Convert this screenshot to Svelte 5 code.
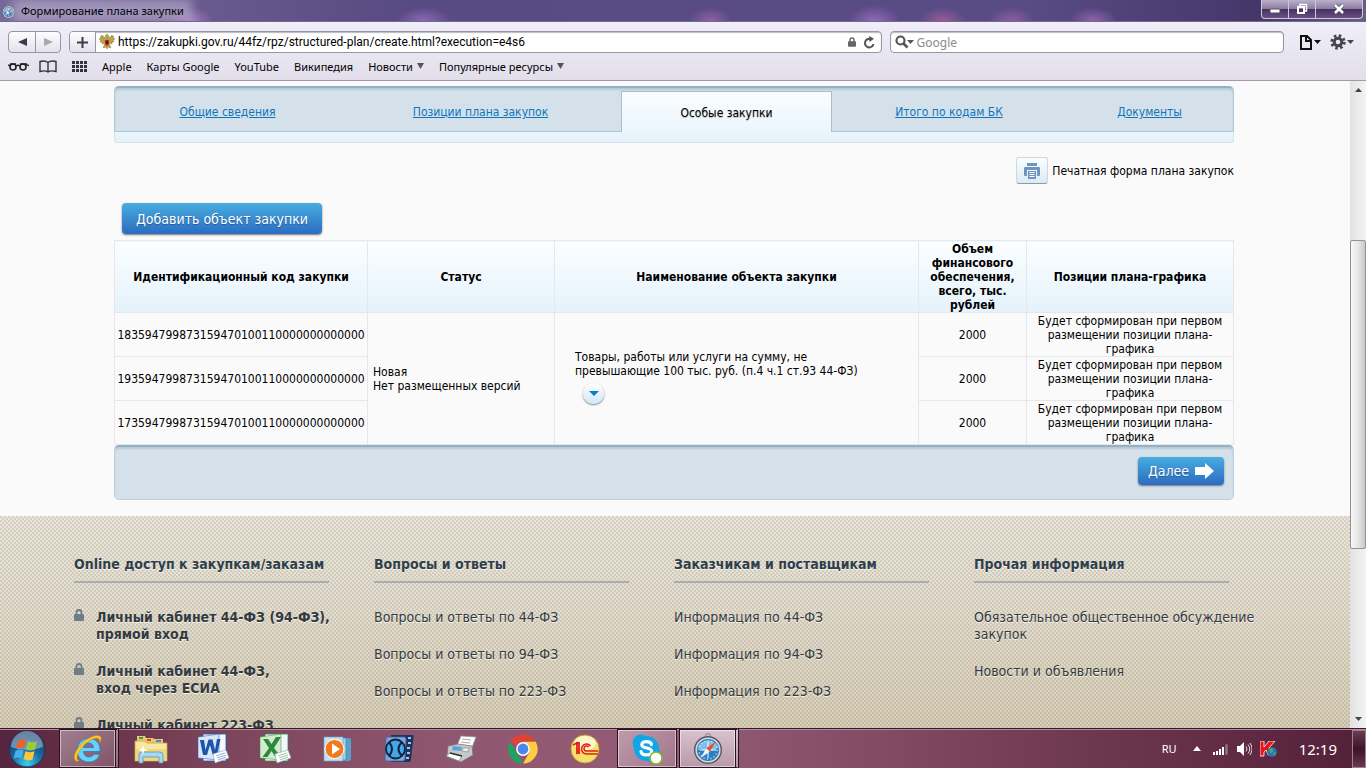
<script lang="ts">
  interface Tab {
    label: string;
    active?: boolean;
  }

  interface FooterColumn {
    title: string;
    secure?: boolean;
    /** Each link is a list of lines. */
    links: string[][];
  }

  const bookmarks = ['Apple', 'Карты Google', 'YouTube', 'Википедия'];
  const folders = ['Новости', 'Популярные ресурсы'];

  const tabs: Tab[] = [
    { label: 'Общие сведения' },
    { label: 'Позиции плана закупок' },
    { label: 'Особые закупки', active: true },
    { label: 'Итого по кодам БК' },
    { label: 'Документы' }
  ];

  const rows = [
    { code: '183594799873159470100110000000000000', sum: 2000 },
    { code: '193594799873159470100110000000000000', sum: 2000 },
    { code: '173594799873159470100110000000000000', sum: 2000 }
  ];

  const footer: FooterColumn[] = [
    {
      title: 'Online доступ к закупкам/заказам',
      secure: true,
      links: [
        ['Личный кабинет 44-ФЗ (94-ФЗ),', 'прямой вход'],
        ['Личный кабинет 44-ФЗ,', 'вход через ЕСИА'],
        ['Личный кабинет 223-ФЗ']
      ]
    },
    {
      title: 'Вопросы и ответы',
      links: [['Вопросы и ответы по 44-ФЗ'], ['Вопросы и ответы по 94-ФЗ'], ['Вопросы и ответы по 223-ФЗ']]
    },
    {
      title: 'Заказчикам и поставщикам',
      links: [['Информация по 44-ФЗ'], ['Информация по 94-ФЗ'], ['Информация по 223-ФЗ']]
    },
    {
      title: 'Прочая информация',
      links: [['Обязательное общественное обсуждение', 'закупок'], ['Новости и объявления']]
    }
  ];

  const apps = [
    { id: 'ie', label: 'Internet Explorer', state: 'open stacked' },
    { id: 'explorer', label: 'Проводник', state: '' },
    { id: 'word', label: 'Word', state: '' },
    { id: 'excel', label: 'Excel', state: '' },
    { id: 'wmp', label: 'Проигрыватель', state: '' },
    { id: 'mpc', label: 'Media Player Classic', state: '' },
    { id: 'fax', label: 'Факс', state: '' },
    { id: 'chrome', label: 'Chrome', state: '' },
    { id: 'onec', label: '1С', state: '' },
    { id: 'skype', label: 'Skype', state: 'open' },
    { id: 'safari', label: 'Safari', state: 'open stacked current' }
  ];

  let url = $state('https://zakupki.gov.ru/44fz/rpz/structured-plan/create.html?execution=e4s6');
  let query = $state('');
</script>

{#snippet compass(size: number)}
  <svg width={size} height={size} viewBox="0 0 32 32" aria-hidden="true">
    <circle cx="16" cy="3" r="2.4" fill="none" stroke="#999" stroke-width="1.4" />
    <circle cx="16" cy="17" r="14" fill="#55585c" />
    <circle cx="16" cy="17" r="12.600" fill="#d4d7da" />
    <circle cx="16" cy="17" r="11" fill="#2a7ec4" />
    <path d="M5.500 15a11 11 0 0 1 21 0q-10 5-21 0z" fill="#7fbfe9" />
    <circle cx="16" cy="17" r="9" fill="none" stroke="#cfe8f8" stroke-width="1.300" stroke-dasharray="1.200 2.300" />
    <path d="M16 9v16M8 17h16" stroke="#fff" stroke-width="1" />
    <path d="M24 8.500 14.200 15.300 17.700 18.800z" fill="#e8502c" />
    <path d="M8.500 25 14.200 15.300 17.700 18.800z" fill="#f4f4f4" />
  </svg>
{/snippet}

{#snippet lock(color: string, width: number)}
  <svg class="lock" {width} height={width + 2} viewBox="0 0 10 12" aria-hidden="true">
    <path d="M2.500 6V3.500a2.500 2.500 0 0 1 5 0V6" fill="none" stroke={color} stroke-width="1.800" />
    <rect x="0" y="5" width="10" height="7" rx="1" fill={color} />
  </svg>
{/snippet}

{#snippet appIcon(id: string)}
  {#if id === 'ie'}
    <svg width="32" height="32" viewBox="0 0 32 32" aria-hidden="true">
      <path d="M28 18.500H11.500c.3 3.600 2.400 5.500 5.400 5.500 2.300 0 3.900-1 4.700-2.700h6C26.200 26 22.500 29 16.800 29 9.800 29 5.300 24.300 5.300 17.300 5.300 10.300 10 5.500 16.800 5.500c7.600 0 11.600 5 11.200 13zM11.600 14.500h10c-.3-2.800-2.100-4.500-4.900-4.500-2.800 0-4.600 1.700-5.100 4.500z" fill="#6dd0f8" stroke="#1d7fc0" stroke-width=".8" />
      <path d="M4.500 28.500C-1 25 4.500 15 12 8.500 19 2.500 28 .5 29 4.500c.4 1.500-.3 3.700-1.300 5.500 .4-3-.5-5-3.500-4.800C15.500 5.700 4.500 19 5 25.500c.1 1.600 1.200 2.300 2.700 2z" fill="#fbc926" stroke="#c98a0c" stroke-width=".5" />
    </svg>
  {:else if id === 'explorer'}
    <svg width="34" height="32" viewBox="0 0 34 32" aria-hidden="true">
      <path d="M3 6V3h8l1 2h7l1 1h9v20H3z" fill="#e8c970" />
      <path d="M5 4h4v2H5z" fill="#28a34a" /><path d="M13 6h4v2h-4z" fill="#d94a2b" /><path d="M22 7h5v2h-5z" fill="#3d8fd0" />
      <path d="M1 8h10l2 2h20v18H1z" fill="#f8e7a0" stroke="#c9a648" stroke-width=".8" />
      <path d="M2 16h30v11H2z" fill="#f1d77c" />
      <path d="M5 30V22q0-3 3-3h18q3 0 3 3v8h-4v-6H9v6z" fill="#a5d8f2" stroke="#5596c2" stroke-width=".8" />
      <path d="M9 12l1 4 4 1-4 1-1 4-1-4-4-1 4-1z" fill="#fff" />
    </svg>
  {:else if id === 'word' || id === 'excel'}
    {@const main = id === 'word' ? '#1f55a8' : '#2c8a3d'}
    <svg width="32" height="32" viewBox="0 0 32 32" aria-hidden="true">
      <path d="M6 1h23v27H6z" fill="#f4f8fd" stroke={main} stroke-width=".8" />
      <path d="M1 4 22 1v26L1 25z" fill={id === 'word' ? '#d8e6f8' : '#d5ebd0'} stroke={main} stroke-width=".5" />
      {#if id === 'word'}
        <path d="M3 7l4 0 1.500 10L11.500 6.500h4L18 17l2-11h3.500L20 22h-4.200L13 12l-3 10H6z" fill={main} />
      {:else}
        <path d="M4 6h5l3.500 5L17 4h5l-7 11 7 9h-5.500l-4-6-4 6H3.500l6.500-9z" fill={main} />
      {/if}
      <path d="M16 21l13-4 3 8-14 5z" fill="#fff" stroke="#8ba6c5" stroke-width=".6" />
      <path d="M19 23l9-3M20 25l9-3M21 27l8-3" stroke={main} stroke-width=".5" />
    </svg>
  {:else if id === 'wmp'}
    <svg width="30" height="28" viewBox="0 0 30 28" aria-hidden="true">
      <path d="M9 3h18l2 1v21l-2 1H9z" fill="#5aa0cb" />
      <path d="M6 3h18v22H6z" fill="#a7d3ec" stroke="#487ea2" stroke-width=".7" />
      <path d="M2 2h19v24H2z" fill="#c5e1f1" stroke="#6ea1bf" stroke-width=".7" />
      <circle cx="12.500" cy="14" r="9.500" fill="#f27a1c" stroke="#fff" stroke-width="1" />
      <path d="M10 8.500v11l8-5.500z" fill="#fff" />
    </svg>
  {:else if id === 'mpc'}
    <svg width="32" height="30" viewBox="0 0 32 30" aria-hidden="true">
      <path d="M8 1h21q2 0 1.500 2L28 26q-.3 2-2.500 2H8z" fill="#1c3560" />
      <path d="M25 4h3M25 9h3M24 14h3M24 19h3M23 24h3" stroke="#a4c4ee" stroke-width="2" />
      <path d="M5 3h16q2 0 2 2l-1 20q0 2-2 2H4q-2 0-2-2L3 5q0-2 2-2z" fill="#7ea7de" stroke="#3c619a" stroke-width=".8" />
      <circle cx="12.500" cy="15" r="9.500" fill="#43a7e8" stroke="#14233c" stroke-width="1.800" />
      <path d="M6 8q6 7 0 14M19 8q-7 7 0 14" fill="none" stroke="#14233c" stroke-width="2" />
    </svg>
  {:else if id === 'fax'}
    <svg width="32" height="30" viewBox="0 0 32 30" aria-hidden="true">
      <path d="M16 2l15 1-5 13-15-2z" fill="#fff" stroke="#999" stroke-width=".7" />
      <path d="M17 5l9 1M16 8l9 1" stroke="#aaa" />
      <path d="M3 12l10-2 14 2 1 9-12 7-14-5z" fill="#c5c7ca" stroke="#75777b" stroke-width=".8" />
      <path d="M8 12l9 1-1 4-9-1z" fill="#5aa3d9" />
      <path d="M18 14l6 0-1 4-6-1z" fill="#eee" stroke="#666" stroke-width=".5" />
      <path d="M1 22l4-3 12 3-3 5z" fill="#fff" stroke="#777" stroke-width=".7" />
      <path d="M5 19l12 3" stroke="#333" stroke-width="1.500" />
    </svg>
  {:else if id === 'chrome'}
    <svg width="30" height="30" viewBox="0 0 30 30" aria-hidden="true">
      <path d="M15 15 2.300 7.700A14.600 14.600 0 0 1 27.700 7.700H15z" fill="#dc4437" />
      <path d="M2.300 7.700 8.700 18.700 15 29.600A14.600 14.600 0 0 1 2.300 7.700z" fill="#1da462" />
      <path d="M27.700 7.700A14.600 14.600 0 0 1 15 29.600L21.300 18.600 21 11 15 7.700z" fill="#ffcd41" />
      <circle cx="15" cy="15" r="6.900" fill="#fff" />
      <circle cx="15" cy="15" r="5.400" fill="#4a86ec" />
    </svg>
  {:else if id === 'onec'}
    <svg width="30" height="30" viewBox="0 0 30 30" aria-hidden="true">
      <circle cx="15" cy="15" r="14" fill="#f4e06c" stroke="#c8a022" stroke-width=".8" />
      <ellipse cx="15" cy="9" rx="11" ry="7" fill="#fdf7cd" />
      <path d="M3 11l4-2v11M6 9h3v11" fill="none" stroke="#e21f1a" stroke-width="1.800" />
      <path d="M20.500 12a5 5 0 1 0-4 8H28M18.500 13a2.500 2.500 0 1 0-2 4H28" fill="none" stroke="#e21f1a" stroke-width="1.600" />
    </svg>
  {:else if id === 'skype'}
    <svg width="32" height="32" viewBox="0 0 32 32" aria-hidden="true">
      <circle cx="10" cy="10" r="8.500" fill="#10a7e8" /><circle cx="21" cy="21" r="8.500" fill="#10a7e8" />
      <circle cx="15.500" cy="15.500" r="12.500" fill="#10a7e8" />
      <path d="M20.500 11.500c-.5-2-2.400-2.800-5-2.800-2.800 0-4.700 1-4.700 3 0 4.500 9.900 2 9.900 6.700 0 2.200-2.200 3.500-5.200 3.500-3 0-5-1.200-5.500-3.300" fill="none" stroke="#fff" stroke-width="3.200" stroke-linecap="round" />
      <circle cx="25" cy="25" r="6" fill="#fff" stroke="#81b82a" stroke-width="1.500" />
    </svg>
  {:else}
    {@render compass(32)}
  {/if}
{/snippet}

<div class="window">
  <header class="titlebar">
    <div class="caption">
      {@render compass(15)}
      <span>Формирование плана закупки</span>
    </div>
    <div class="window-controls">
      <button type="button" aria-label="Свернуть">
        <svg width="12" height="10" viewBox="0 0 12 10"><rect x="1" y="5" width="10" height="4" rx="1" fill="#fff" stroke="#555568" /></svg>
      </button>
      <button type="button" aria-label="Восстановить">
        <svg width="12" height="12" viewBox="0 0 12 12"><path d="M4 3V1.500h6.500V8H9" fill="none" stroke="#fff" stroke-width="1.500" /><rect x="2" y="4" width="6" height="6" fill="none" stroke="#fff" stroke-width="2" /></svg>
      </button>
      <button type="button" class="close" aria-label="Закрыть">
        <svg width="12" height="12" viewBox="0 0 12 12"><path d="M2 2l8 8M10 2l-8 8" stroke="#4a4560" stroke-width="4" /><path d="M2 2l8 8M10 2l-8 8" stroke="#fff" stroke-width="2.500" /></svg>
      </button>
    </div>
  </header>

  <div class="toolbar">
    <div class="address-row">
      <div class="history">
        <button type="button" aria-label="Назад"><svg width="9" height="8" viewBox="0 0 9 8"><path d="M9 0v8L0 4z" fill="#3f3b49" /></svg></button>
        <button type="button" aria-label="Вперёд"><svg width="9" height="8" viewBox="0 0 9 8"><path d="M0 0v8l9-4z" fill="#a9a6b1" /></svg></button>
      </div>
      <div class="field address">
        <button type="button" class="plus" aria-label="Добавить закладку"><svg width="11" height="11" viewBox="0 0 11 11"><path d="M5.500 0v11M0 5.500h11" stroke="#3f3b49" stroke-width="2" /></svg></button>
        <svg width="16" height="16" viewBox="0 0 16 16" aria-hidden="true">
          <path d="M7 5 3 1 1 3l1 1-2 1 2 1-1 2 2 0 0 2 3-1-2 5 3-1 1 2 1-2 3 1-2-5 3 1 0-2 2 0-1-2 2-1-2-1 1-1-2-2-4 4 1-3-2-2-2 2z" fill="#b3a548" stroke="#7b7030" stroke-width=".4" />
          <path d="M6 6h4v4l-2 2-2-2z" fill="#c21f26" />
          <path d="M7 7h2v3H7z" fill="#701317" />
        </svg>
        <input class="url" type="text" aria-label="Адрес" bind:value={url} />
        {@render lock('#666', 8)}
        <button type="button" class="plain" aria-label="Обновить"><svg width="12" height="13" viewBox="0 0 12 13"><path d="M10.500 8a4.300 4.300 0 1 1-2.800-5" fill="none" stroke="#555" stroke-width="2" /><path d="M6 0l5 2.800L6.500 6z" fill="#555" /></svg></button>
      </div>
      <div class="field search">
        <svg width="19" height="14" viewBox="0 0 19 14" aria-hidden="true"><circle cx="5.500" cy="5.500" r="4" fill="none" stroke="#555" stroke-width="2.200" /><path d="M8.500 8.500l4 4" stroke="#555" stroke-width="2.600" /><path d="M12 5h7l-3.500 4z" fill="#555" /></svg>
        <input type="text" aria-label="Поиск" placeholder="Google" bind:value={query} />
      </div>
      <div class="menus">
        <button type="button" class="plain" aria-label="Страница"><svg width="22" height="15" viewBox="0 0 22 15"><path d="M2 1h6l4 4v9H2zM7 1v5h5" fill="none" stroke="#111" stroke-width="2" /><path d="M15 5h7l-3.500 4z" fill="#111" /></svg></button>
        <button type="button" class="plain" aria-label="Настройки"><svg width="24" height="16" viewBox="0 0 24 16"><circle cx="8" cy="8" r="6.200" fill="none" stroke="#47444f" stroke-width="3" stroke-dasharray="2.500 2.370" /><circle cx="8" cy="8" r="3.800" fill="none" stroke="#47444f" stroke-width="3" /><path d="M17 6h7l-3.500 4z" fill="#47444f" /></svg></button>
      </div>
    </div>
    <nav class="bookmarks" aria-label="Закладки">
      <button type="button" class="plain" aria-label="Список для чтения"><svg width="21" height="10" viewBox="0 0 21 10"><g fill="none" stroke="#222" stroke-width="1.600"><circle cx="5" cy="6" r="3" /><circle cx="15" cy="6" r="3" /><path d="M8 5q2-1.500 4 0M0 4.500l3-1M21 4.500 17 3.500M2 3h6M12 3h7" /></g></svg></button>
      <button type="button" class="plain" aria-label="Закладки"><svg width="18" height="13" viewBox="0 0 18 13"><path d="M9 2.500Q6 0 1 1.500v10q5-1.500 8 .5 3-2 8-.5v-10q-5-1.500-8 1zV12" fill="none" stroke="#333" stroke-width="1.400" /></svg></button>
      <button type="button" class="plain" aria-label="Top Sites"><svg width="15" height="11" viewBox="0 0 15 11"><path d="M0 1.500h15M0 5.500h15M0 9.500h15" stroke="#333" stroke-width="3" stroke-dasharray="3 1" /></svg></button>
      {#each bookmarks as name}
        <a href="#{name}">{name}</a>
      {/each}
      {#each folders as name}
        <button type="button" class="plain folder">{name}<svg width="7" height="6" viewBox="0 0 7 6" aria-hidden="true"><path d="M0 0h7L3.500 6z" fill="#555" /></svg></button>
      {/each}
    </nav>
  </div>

  <div class="viewport">
    <main class="page">
      <div class="content">
        <nav class="tabs">
          {#each tabs as tab}
            {#if tab.active}
              <span class="tab active" aria-current="page">{tab.label}</span>
            {:else}
              <a class="tab" href="#tab"><span>{tab.label}</span></a>
            {/if}
          {/each}
        </nav>
        <div class="tabs-strip"></div>

        <div class="print">
          <button type="button" id="print" aria-labelledby="print-label">
            <svg width="16" height="16" viewBox="0 0 16 16" aria-hidden="true"><path d="M3 0h10v3H3zM0 5q0-1 1-1h14q1 0 1 1v7q0 1-1 1h-2V7H3v6H1q-1 0-1-1z" fill="#6f94c0" /><path d="M4 8h8v8H4z" fill="#6f94c0" /><path d="M5.500 9.500h5M5.500 11.500h5M5.500 13.500h5" stroke="#fff" /></svg>
          </button>
          <label id="print-label" for="print">Печатная форма плана закупок</label>
        </div>

        <button type="button" class="primary add">Добавить объект закупки</button>

        <table>
          <colgroup>
            <col class="c-code" /><col class="c-status" /><col /><col class="c-sum" /><col class="c-plan" />
          </colgroup>
          <thead>
            <tr>
              <th>Идентификационный код закупки</th>
              <th>Статус</th>
              <th>Наименование объекта закупки</th>
              <th>Объем финансового обеспечения, всего, тыс. рублей</th>
              <th>Позиции плана-графика</th>
            </tr>
          </thead>
          <tbody>
            {#each rows as row, i}
              <tr>
                <td>{row.code}</td>
                {#if i === 0}
                  <td class="status" rowspan={rows.length}>Новая<br />Нет размещенных версий</td>
                  <td class="subject" rowspan={rows.length}>
                    Товары, работы или услуги на сумму, не<br />превышающие 100 тыс. руб. (п.4 ч.1 ст.93 44-ФЗ)
                    <button type="button" class="expand" aria-label="Меню">
                      <svg width="10" height="5" viewBox="0 0 10 5"><path d="M0 0h10L5 5z" fill="#0a7ccc" /></svg>
                    </button>
                  </td>
                {/if}
                <td>{row.sum}</td>
                <td>Будет сформирован при первом размещении позиции плана-графика</td>
              </tr>
            {/each}
          </tbody>
        </table>

        <div class="actions">
          <button type="button" class="primary next">
            Далее
            <svg width="19" height="16" viewBox="0 0 19 16" aria-hidden="true"><path d="M0 4h10V0l9 8-9 8v-4H0z" fill="#fff" /></svg>
          </button>
        </div>
      </div>

      <footer>
        <div class="footer-grid">
          {#each footer as column}
            <section>
              <h2>{column.title}</h2>
              <ul class:secure={column.secure}>
                {#each column.links as lines}
                  <li>
                    {#if column.secure}{@render lock('#6f7d87', 10)}{/if}
                    <a href="#link">
                      {#each lines as line, i}{#if i > 0}<br />{/if}{line}{/each}
                    </a>
                  </li>
                {/each}
              </ul>
            </section>
          {/each}
        </div>
      </footer>
    </main>

    <div class="scrollbar" aria-hidden="true">
      <svg width="7" height="4" viewBox="0 0 7 4"><path d="M3.500 0 7 4H0z" fill="#444" /></svg>
      <div class="rail">
        <div class="before"></div>
        <div class="thumb"></div>
        <div class="after"></div>
      </div>
      <svg width="7" height="4" viewBox="0 0 7 4"><path d="M3.500 4 7 0H0z" fill="#444" /></svg>
    </div>
  </div>

  <div class="taskbar">
    <button type="button" class="start" aria-label="Пуск">
      <svg width="38" height="38" viewBox="0 0 38 38">
        <defs>
          <radialGradient id="orb" cx="50%" cy="90%" r="80%">
            <stop offset="0" stop-color="#36d0f4" /><stop offset=".5" stop-color="#1c69a3" /><stop offset="1" stop-color="#1c3a63" />
          </radialGradient>
        </defs>
        <circle cx="19" cy="19" r="18" fill="url(#orb)" stroke="#23354f" />
        <path d="M3 17a16 16 0 0 1 32 0q-16 6-32 0z" fill="#b9d2e5" opacity=".5" />
        <path d="M10 11q4-2.500 8-.5l-2 8q-4-2-8 .5z" fill="#f0602a" />
        <path d="M20 11q4 2.500 9 0l-2 8.500q-4.500 2-9 0z" fill="#9bcb3b" />
        <path d="M7.500 21q4-2.500 8-.5l-2 8q-4-2-8 .5z" fill="#45b0ea" />
        <path d="M17.500 21q4.500 2.500 9 0l-2 8.500q-4.500 2-9-.5z" fill="#fcc934" />
      </svg>
    </button>
    <div class="apps">
      {#each apps as app}
        <button type="button" class="app {app.state}" aria-label={app.label}>{@render appIcon(app.id)}</button>
      {/each}
    </div>
    <div class="tray">
      <span class="lang">RU</span>
      <svg width="8" height="5" viewBox="0 0 8 5" aria-hidden="true"><path d="M4 0l4 5H0z" fill="#fff" /></svg>
      <svg width="16" height="12" viewBox="0 0 16 12" aria-hidden="true"><path d="M0 9h2v3H0zM3 8h2v4H3zM6 6h2v6H6zM9 4h2v8H9z" fill="#fff" /><path d="M12 1h3v11h-3z" fill="#97768a" stroke="#402233" stroke-width=".5" /></svg>
      <svg width="15" height="14" viewBox="0 0 15 14" aria-hidden="true"><path d="M0 4h3l4-4v14l-4-4H0z" fill="#fff" /><path d="M9 4.500q2 2.500 0 5M11 2.500q3.500 4.500 0 9M13 1q4 6 0 12" fill="none" stroke="#ddd" /></svg>
      <svg width="17" height="16" viewBox="0 0 17 16" aria-hidden="true"><path d="M0 0h4v6l5-6h6L9 7l3 7H8L6 9l-2 2v4H0z" fill="#e8141c" stroke="#fff" stroke-width=".8" /><circle cx="12" cy="11" r="4.800" fill="#2d70c8" /><path d="M9 8q3-2 4 1t-3 3zM13 12l3-1-1 4z" fill="#46b345" /></svg>
      <time>12:19</time>
    </div>
    <button type="button" class="desktop" aria-label="Свернуть все окна"></button>
  </div>
</div>

<style>
  :global(body) {
    margin: 0;
  }
  .window {
    display: flex;
    flex-direction: column;
    height: 100vh;
    overflow: hidden;
    font-family: 'Noto Sans', sans-serif;
    font-size: 12px;
    color: #000;
  }
  button {
    font: inherit;
    color: inherit;
    padding: 0;
    border: 0;
    background: none;
  }
  button,
  .caption,
  .field,
  .history {
    display: flex;
    align-items: center;
  }
  button {
    justify-content: center;
  }
  svg {
    display: block;
    flex: none;
  }

  /* window chrome */
  .titlebar {
    display: flex;
    justify-content: space-between;
    align-items: flex-start;
    flex: none;
    height: 22px;
    box-sizing: border-box;
    overflow: hidden;
    border-bottom: 1px solid #746891;
    background:
      radial-gradient(ellipse 22px 14px at 14% 100%, #a577bd, transparent),
      radial-gradient(ellipse 28px 14px at 31% 100%, #8d68b8, transparent),
      radial-gradient(ellipse 22px 14px at 52% 100%, #8e63a5, transparent),
      radial-gradient(ellipse 26px 16px at 64% 100%, #9269bb, transparent),
      radial-gradient(ellipse 24px 14px at 69% 100%, #985c99, transparent),
      radial-gradient(ellipse 24px 14px at 74% 100%, #8b5da3, transparent),
      radial-gradient(ellipse 24px 14px at 80% 100%, #8f64ad, transparent),
      linear-gradient(90deg, #776a9a 0, #584a82 30%, #594b84 75%, #45366a 92%, #6b5c85);
  }
  .caption {
    gap: 5px;
    height: 22px;
    padding-left: 1px;
    font-size: 11px;
  }
  .caption span {
    background: rgba(190, 180, 210, 0.6);
    box-shadow: 0 0 10px 8px rgba(190, 180, 210, 0.6);
    line-height: 8px;
  }
  .window-controls {
    display: flex;
    height: 18px;
    margin-right: 3px;
    border: 1px solid #cfc6dc;
    border-top: 0;
    border-radius: 0 0 4px 4px;
    background: linear-gradient(#bcb0cb 0, #8b7ba1 50%, #45315f 51%, #6a5084);
  }
  .window-controls button {
    width: 27px;
    border-right: 1px solid #cfc6dc;
  }
  .window-controls .close {
    width: 46px;
    border-right: 0;
  }
  .toolbar {
    flex: none;
    padding: 9px 8px 0;
    height: 59px;
    box-sizing: border-box;
    border-bottom: 1px solid #a398ae;
    background: linear-gradient(#f0eef9, #e2dfeb);
  }
  .address-row {
    display: flex;
    gap: 8px;
  }
  .history,
  .field {
    box-sizing: border-box;
    height: 22px;
    border: 1px solid #9a94a6;
    border-radius: 4px;
    overflow: hidden;
  }
  .history {
    background: linear-gradient(#fdfdff, #e4e1ea);
  }
  .history button {
    width: 26px;
    height: 20px;
  }
  .history button + button {
    width: 25px;
    border-left: 1px solid #9a94a6;
  }
  .field {
    background: #fff;
    box-shadow: inset 0 1px 1px #bbb8c2;
  }
  .address {
    flex: 814 1 0;
    gap: 3px;
    padding-right: 6px;
  }
  .address .plain {
    margin-left: 4px;
  }
  .search {
    flex: 393 1 0;
    gap: 3px;
    padding-left: 4px;
  }
  .plus {
    width: 26px;
    height: 20px;
    border-right: 1px solid #9a94a6;
    background: linear-gradient(#fdfdff, #e4e1ea);
  }
  input {
    flex: 1;
    min-width: 0;
    padding: 0;
    border: 0;
    outline: 0;
    background: none;
    font: inherit;
    color: inherit;
  }
  .url {
    font-family: Roboto, 'Noto Sans', sans-serif;
  }
  input::placeholder {
    color: #8a8a8a;
    opacity: 1;
  }
  .menus {
    display: flex;
    gap: 9px;
    padding: 0 4px 0 7px;
  }
  .bookmarks {
    display: flex;
    align-items: center;
    gap: 15px;
    height: 26px;
    font-size: 11px;
  }
  .bookmarks a {
    color: #000;
    text-decoration: none;
  }
  .bookmarks button:first-child {
    margin-right: -5px;
  }
  .folder {
    gap: 4px;
  }

  /* page */
  .viewport {
    display: flex;
    flex: 1;
    min-height: 0;
    background: #fafafa;
  }
  .page {
    display: flex;
    flex-direction: column;
    flex: 1;
    min-width: 0;
    overflow: hidden;
    font-family: 'DejaVu Sans Condensed', 'DejaVu Sans', sans-serif;
    line-height: 14px;
  }
  .content {
    width: calc(100% - 32px);
    max-width: 1120px;
    margin: 0 auto;
    padding: 5px 2px 16px 0;
  }
  .tabs {
    display: grid;
    grid-template-columns: 225fr 281fr 211fr 234fr 167fr;
    height: 46px;
    box-sizing: border-box;
    border: 1px solid #b0c6d3;
    border-top: 2px solid #94b2c4;
    border-radius: 5px 5px 0 0;
    background: #d5e1ea;
    box-shadow: inset 0 2px 2px #b5cad7;
  }
  .tab {
    display: flex;
    align-items: center;
    justify-content: center;
    padding-top: 5px;
    color: #0e76bc;
  }
  .tab.active {
    margin: 3px 0 -1px;
    padding-top: 1px;
    border: 1px solid #a9becb;
    border-bottom: 0;
    background: linear-gradient(#fafdff, #eaf5fc);
    color: #000;
    text-shadow: 0 1px 1px #bbb;
  }
  .tabs-strip {
    height: 10px;
    border: 1px solid #d7e3ea;
    border-top: 0;
    border-radius: 0 0 3px 3px;
    background: linear-gradient(#eaf5fc, #e4f1fa);
  }
  .print {
    display: flex;
    justify-content: flex-end;
    align-items: center;
    gap: 4px;
    margin-top: 14px;
  }
  .print button {
    width: 32px;
    height: 27px;
    border: 1px solid #cfd8dd;
    border-bottom-color: #929ba0;
    border-radius: 3px;
    background: linear-gradient(#fafdff, #d9ebf6);
  }
  .primary {
    border-radius: 4px;
    background: linear-gradient(#47addf, #2c6cc2);
    box-shadow: 0 1px 2px #777;
    color: #fff;
    font-size: 14px;
    text-shadow: 0 1px 1px #245a94;
  }
  .add {
    height: 31px;
    margin: 19px 0 6px 8px;
    padding: 0 14px;
  }
  table {
    width: 100%;
    table-layout: fixed;
    border-collapse: collapse;
    text-align: center;
  }
  .c-code {
    width: 253px;
  }
  .c-status {
    width: 187px;
  }
  .c-sum {
    width: 108px;
  }
  .c-plan {
    width: 207px;
  }
  th,
  td {
    padding: 0;
    border: 1px solid #e6e7e8;
  }
  th {
    height: 72px;
    box-sizing: border-box;
    background: linear-gradient(#fbfeff, #e4f2fb);
  }
  td {
    height: 43px;
  }
  .status {
    padding-left: 5px;
    text-align: left;
  }
  .subject {
    padding: 0 0 4px 20px;
    text-align: left;
  }
  .expand {
    width: 21px;
    height: 21px;
    margin: 5px 0 0 8px;
    border-radius: 50%;
    background: linear-gradient(#fff, #cfe8f6);
    box-shadow: 0 1px 2px #777;
  }
  .actions {
    display: flex;
    justify-content: flex-end;
    align-items: flex-start;
    height: 55px;
    box-sizing: border-box;
    padding: 10px 9px 0;
    border: 1px solid #bfd0dc;
    border-top: 2px solid #94b2c4;
    border-radius: 5px;
    background: #d5e1ea;
    box-shadow: inset 0 2px 2px #b5cad7;
  }
  .next {
    gap: 6px;
    height: 28px;
    padding: 0 10px;
  }

  footer {
    flex: 1 0 auto;
    /* fine woven dots over the vertical fade */
    background:
      radial-gradient(circle at 1px 1px, rgba(110, 95, 60, 0.16) 0 1px, transparent 1px) 0 0 / 4px 4px,
      radial-gradient(circle at 1px 1px, rgba(110, 95, 60, 0.16) 0 1px, transparent 1px) 2px 2px / 4px 4px,
      linear-gradient(#e9e5da, #e4ded2 80px, #d6ceb8 212px);
    color: #333a40;
    font-size: 14px;
    line-height: 17px;
    text-shadow: 0 1px 0 #f5f1e6;
  }
  .footer-grid {
    display: grid;
    grid-template-columns: repeat(4, 1fr);
    max-width: 1200px;
    margin: 0 auto;
    padding: 40px 2px 0 0;
  }
  h2 {
    width: 85%;
    margin: 0 0 26px;
    padding-bottom: 8px;
    border-bottom: 2px solid #a9adb0;
    color: #2f3e4c;
    font-size: 14px;
    line-height: 17px;
    white-space: nowrap;
  }
  ul {
    display: flex;
    flex-direction: column;
    gap: 20px;
    margin: 0;
    padding: 0;
    list-style: none;
    white-space: nowrap;
  }
  li {
    display: flex;
    gap: 12px;
  }
  li a {
    color: inherit;
    text-decoration: none;
  }
  .secure {
    font-weight: bold;
  }

  .scrollbar {
    display: flex;
    flex-direction: column;
    align-items: center;
    width: 16px;
    padding: 7px 0;
    box-sizing: border-box;
    background: linear-gradient(90deg, #e2e2e2, #f4f4f4);
  }
  .rail {
    display: flex;
    flex-direction: column;
    flex: 1;
    align-self: stretch;
  }
  .before {
    flex: 148;
  }
  .thumb {
    flex: 307;
    border: 1px solid #929292;
    border-radius: 2px;
    background: linear-gradient(90deg, #f7f7f7, #e6e6e6 50%, #c9c9c9);
  }
  .after {
    flex: 168;
  }

  /* taskbar */
  .taskbar {
    display: flex;
    flex: none;
    height: 40px;
    box-sizing: border-box;
    border-top: 1px solid #35182a;
    box-shadow: inset 0 1px 0 #b58ba0;
    background: linear-gradient(90deg, #57243d 0, #7b4359 15%, #8f566f 32%, #935c76 50%, #824a63 65%, #6b354d 82%, #541f39);
  }
  .start {
    width: 59px;
    padding-right: 6px;
    box-sizing: border-box;
  }
  .apps {
    display: flex;
    gap: 2px;
  }
  .app {
    width: 60px;
  }
  .open {
    border: 1px solid #29131f;
    background: linear-gradient(135deg, rgba(255, 255, 255, 0.4), rgba(255, 255, 255, 0.15));
    box-shadow: inset 0 0 0 1px rgba(255, 255, 255, 0.5);
  }
  .stacked {
    border-right-width: 4px;
    border-right-style: double;
  }
  .current {
    background: linear-gradient(#d8c3cf, #b999a9);
  }
  .tray {
    display: flex;
    align-items: center;
    gap: 12px;
    margin-left: auto;
    padding-right: 15px;
    color: #fff;
  }
  .lang {
    margin-right: 4px;
    font-size: 11px;
  }
  .tray svg + svg {
    margin-right: -4px;
  }
  time {
    margin-left: 14px;
    font-size: 15px;
  }
  .desktop {
    width: 14px;
    margin-top: 1px;
    border: 1px solid #a37d91;
    background: linear-gradient(#6a3c52, #3c1327 50%, #693a50);
  }
</style>
